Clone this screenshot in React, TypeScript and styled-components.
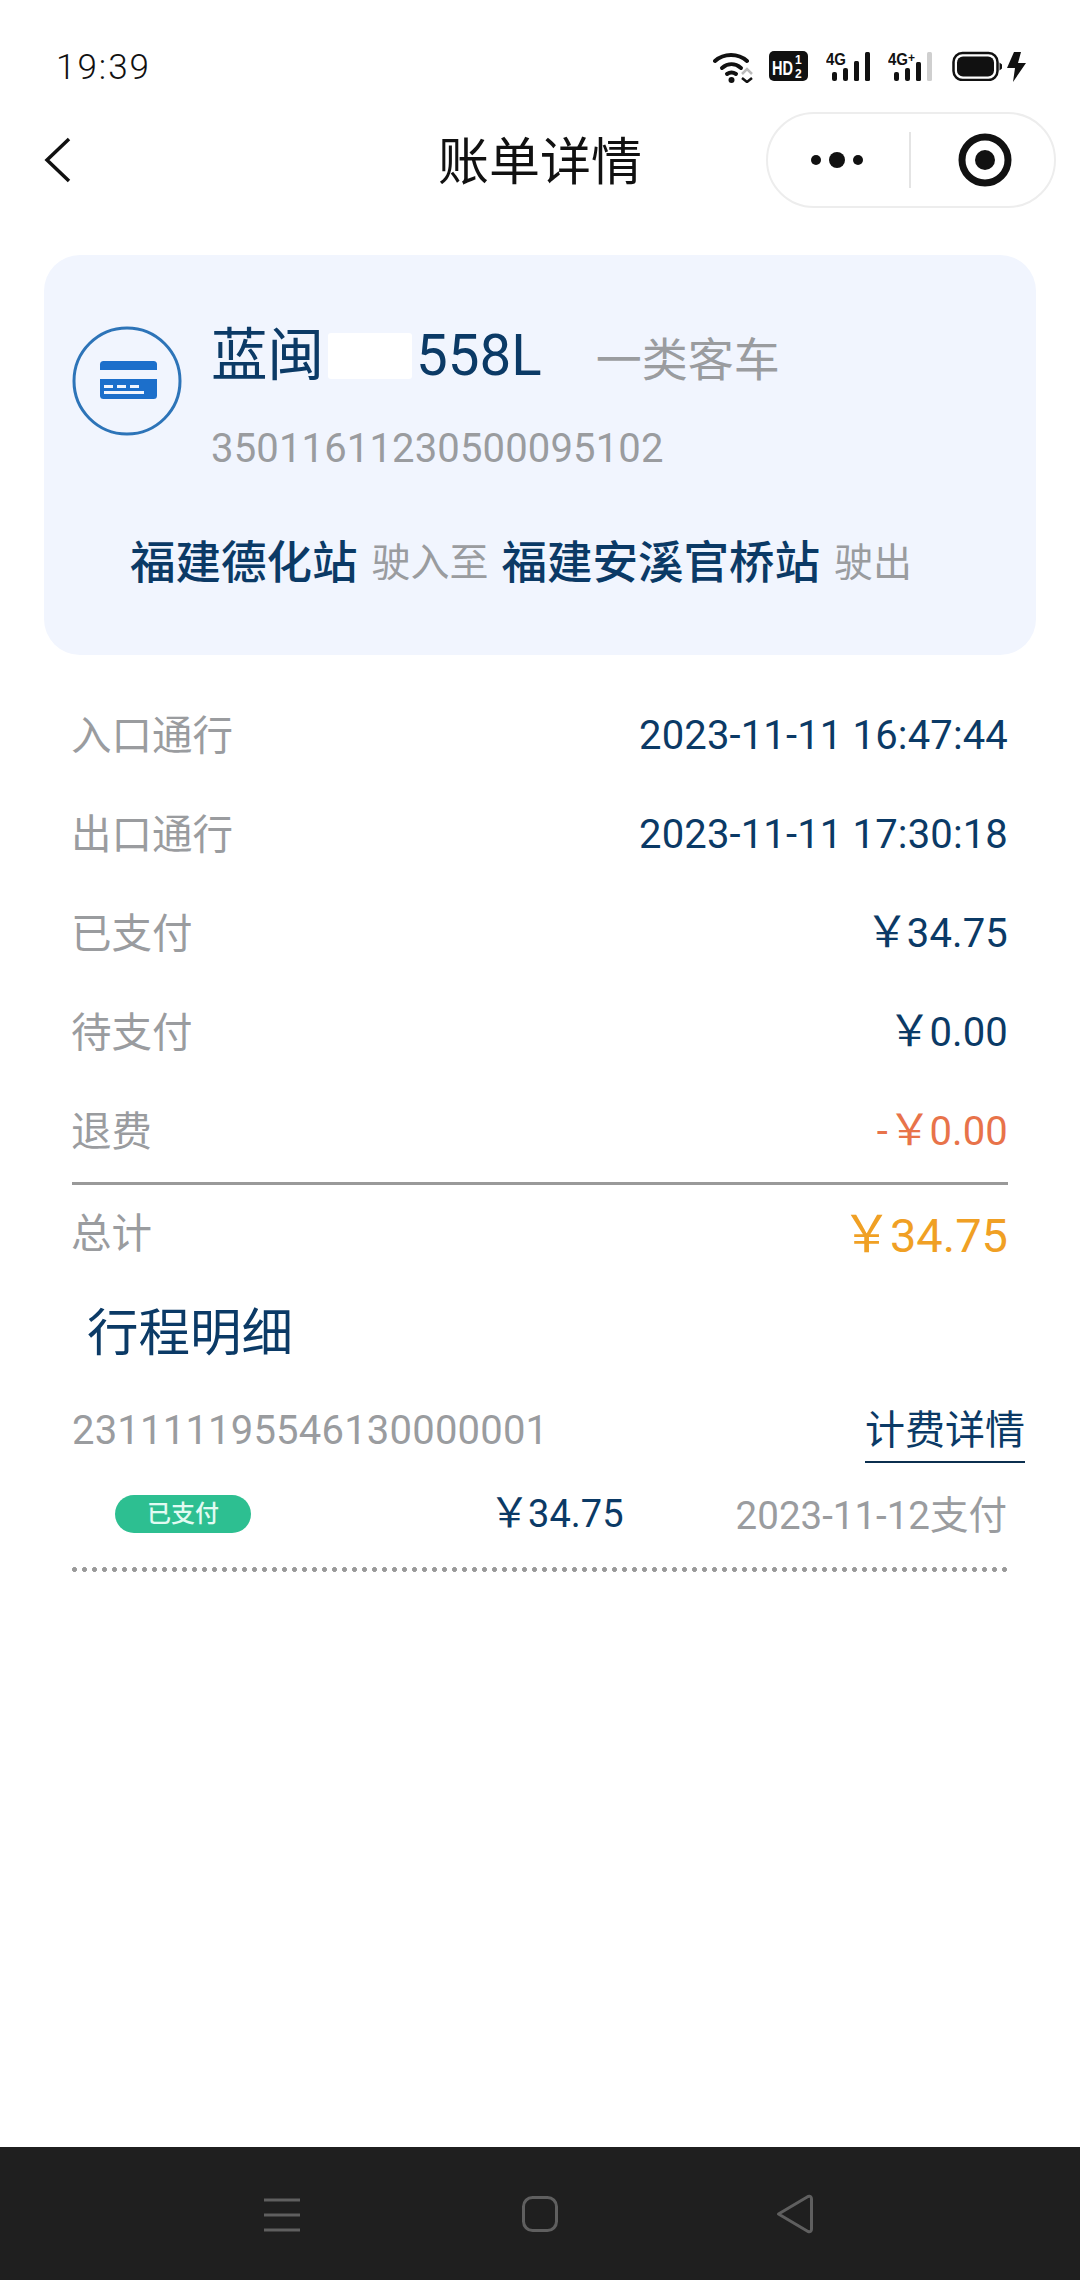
import React from "react";
import styled, { createGlobalStyle } from "styled-components";

const FONT = `Roboto, "Noto Sans CJK SC", sans-serif`;
const NAVY = "#0b3a66";
const GREY = "#9a9c9f";

const Global = createGlobalStyle`
  html, body { margin: 0; padding: 0; background: #fff; }
  * { box-sizing: border-box; }
`;

const Screen = styled.div`
  width: 1080px;
  height: 2280px;
  display: flex;
  flex-direction: column;
  background: #fff;
  font-family: ${FONT};
  overflow: hidden;
`;

const StatusBar = styled.div`
  height: 112px;
  padding: 0 54px 0 56px;
  display: flex;
  align-items: flex-start;
  justify-content: space-between;
  color: #111;
`;

const Clock = styled.div`
  margin-top: 48px;
  font-size: 35px;
  line-height: 40px;
  font-weight: 300;
  letter-spacing: 2px;
`;

const StatusIcons = styled.div`
  margin-top: 51px;
  display: flex;
  align-items: flex-start;
`;

const StatusIcon = styled.svg<{ $gap?: number }>`
  display: block;
  margin-left: ${(p) => p.$gap ?? 0}px;
`;

const NavBar = styled.div`
  height: 96px;
  padding: 0 24px;
  display: grid;
  grid-template-columns: minmax(0, 1fr) auto minmax(0, 1fr);
  align-items: center;
`;

const BackButton = styled.svg`
  display: block;
  margin-left: 20px;
`;

const Title = styled.div`
  margin-top: 5px;
  font-size: 51px;
  line-height: 60px;
  color: #111;
  font-weight: 400;
`;

const Capsule = styled.div`
  justify-self: end;
  width: 290px;
  height: 96px;
  border: 2px solid #ededed;
  border-radius: 48px;
  display: flex;
  align-items: center;
  background: #fff;
`;

const CapsuleCell = styled.div<{ $shift?: number }>`
  flex: 1;
  display: flex;
  align-items: center;
  justify-content: center;
  padding-left: ${(p) => p.$shift ?? 0}px;
`;

const CapsuleDivider = styled.div`
  width: 2px;
  height: 56px;
  margin-left: 2px;
  background: #e4e4e4;
`;

const SummaryCard = styled.section`
  margin: 47px 44px 0;
  height: 400px;
  background: #f1f5fe;
  border-radius: 36px;
  padding: 62px 0 0 28px;
`;

const CardHead = styled.div`
  display: flex;
  align-items: flex-start;
`;

const CardBadge = styled.svg`
  display: block;
  margin-top: 9px;
  flex: none;
`;

const CardInfo = styled.div`
  margin-left: 29px;
`;

const PlateLine = styled.div`
  display: flex;
  align-items: center;
  height: 86px;
  margin-top: -4px;
`;

const Plate = styled.span`
  font-size: 56.5px;
  line-height: 66px;
  color: ${NAVY};
`;

const PlateMask = styled.span`
  display: inline-block;
  width: 84px;
  height: 46px;
  margin: 0 4px 0 4px;
  background: #fff;
  border-radius: 3px;
`;

const VehicleClass = styled.span`
  margin-left: 54px;
  font-size: 46px;
  color: ${GREY};
`;

const CardNumber = styled.div`
  margin-top: 26px;
  font-size: 40px;
  line-height: 48px;
  letter-spacing: 0.15px;
  color: ${GREY};
`;

const Route = styled.div`
  margin-top: 56px;
  padding-left: 58px;
  display: flex;
  align-items: center;
  height: 60px;
`;

const Station = styled.span`
  font-size: 45.5px;
  font-weight: 500;
  color: ${NAVY};
`;

const RouteVerb = styled.span`
  margin: 0 13px 0 14px;
  font-size: 39px;
  color: ${GREY};
`;

const Details = styled.section`
  margin-top: 28px;
  padding: 0 72px;
`;

const Row = styled.div`
  height: 99px;
  display: flex;
  align-items: center;
  justify-content: space-between;
`;

const Label = styled.span`
  font-size: 40.5px;
  margin-left: -1px;
  color: ${GREY};
`;

const Value = styled.span<{ $color?: string }>`
  margin-top: 5px;
  font-size: 40px;
  letter-spacing: 0.15px;
  color: ${(p) => p.$color ?? NAVY};
`;

const Yuan = styled.span`
  font-size: 1.08em;
  line-height: 1;
  margin-right: -2px;
`;

const Rule = styled.div`
  margin-top: 4px;
  height: 3px;
  background: #999;
`;

const TotalRow = styled.div`
  height: 96px;
  display: flex;
  align-items: center;
  justify-content: space-between;
`;

const TotalLabel = styled(Label)`
  margin-top: -6px;
`;

const TotalValue = styled.span`
  margin-top: 4px;
  font-size: 47px;
  color: #f0a024;
`;

const SectionTitle = styled.h2`
  margin: 0;
  padding-left: 15px;
  height: 94px;
  display: flex;
  align-items: center;
  font-size: 51.5px;
  font-weight: 400;
  color: ${NAVY};
`;

const TripHead = styled.div`
  margin: 26px -17px 0 0;
  display: flex;
  justify-content: space-between;
  align-items: flex-start;
`;

const TripNumber = styled.span`
  font-size: 40px;
  line-height: 60px;
  letter-spacing: 0.2px;
  color: ${GREY};
`;

const FeeLink = styled.span`
  width: 160px;
  height: 60px;
  line-height: 60px;
  text-align: center;
  font-size: 40px;
  color: ${NAVY};
  border-bottom: 2px solid #0b2f4f;
  box-sizing: content-box;
`;

const TripRow = styled.div`
  height: 70px;
  margin-top: 16px;
  display: grid;
  grid-template-columns: 417px auto 1fr;
  align-items: center;
`;

const PaidTag = styled.span`
  margin-left: 43px;
  width: 136px;
  height: 38px;
  border-radius: 19px;
  background: #2dbf91;
  color: #e2fbf2;
  font-size: 24px;
  font-weight: 500;
  line-height: 38px;
  text-align: center;
`;

const TripAmount = styled.span`
  font-size: 38px;
  color: ${NAVY};
`;

const TripDate = styled.span`
  justify-self: end;
  margin: -5px 1px 0 0;
  font-size: 38.5px;
  color: ${GREY};
`;

const DottedRule = styled.div`
  margin-top: 18px;
  height: 5px;
  background-image: radial-gradient(circle at 2.5px 2.5px, #9a9a9a 2.2px, transparent 2.6px);
  background-size: 10px 5px;
  background-repeat: repeat-x;
`;

const Spacer = styled.div`
  flex: 1;
`;

const SystemNav = styled.div`
  height: 133px;
  flex: none;
  background: #1f1f1f;
  display: flex;
  align-items: flex-start;
  padding: 47px 0 0 264px;
`;

const MenuKey = styled.svg`
  display: block;
  margin-top: 4px;
`;

const HomeKey = styled.svg`
  display: block;
  margin: 2px 0 0 222px;
`;

const BackKey = styled.svg`
  display: block;
  margin-left: 218px;
`;

const condensed = `"Liberation Sans", Arial, sans-serif`;

function Signal({ plus, dim }: { plus?: boolean; dim?: boolean }) {
  return (
    <StatusIcon width="44" height="31" viewBox="0 0 44 31" $gap={18}>
      <text x="0" y="14" fontFamily={condensed} fontSize="17" fontWeight="700" fill="#111" textLength="20" lengthAdjust="spacingAndGlyphs">4G</text>
      {plus && <text x="20" y="11" fontFamily={condensed} fontSize="12" fontWeight="700" fill="#111">+</text>}
      <rect x="6" y="21" width="5" height="9" rx="2" fill="#111" />
      <rect x="17" y="17" width="5" height="13" rx="2" fill="#111" />
      <rect x="28" y={plus ? 11 : 10} width="5" height={plus ? 19 : 20} rx="1.5" fill="#111" />
      <rect x="39" y="1" width="5" height="29" rx="1.5" fill={dim ? "#cfcfcf" : "#111"} />
    </StatusIcon>
  );
}

export default function App() {
  return (
    <Screen>
      <Global />
      <StatusBar>
        <Clock>19:39</Clock>
        <StatusIcons>
          <StatusIcon width="40" height="32" viewBox="0 0 40 32">
            <g fill="none" stroke="#111" strokeLinecap="round" strokeWidth="4">
              <path d="M2 10 C11 2 25 2 34 10" />
              <path d="M9 17 C15 12 22 12 28 17" />
              <path d="M14 23 C17 21 20 21 23 23" />
            </g>
            <circle cx="18.5" cy="29" r="3" fill="#111" />
            <path d="M29 23 L34 18 L39 23" fill="none" stroke="#bbb" strokeWidth="2.5" />
            <path d="M29 27 L34 31 L39 27" fill="none" stroke="#111" strokeWidth="2.5" />
          </StatusIcon>
          <StatusIcon width="39" height="31" viewBox="0 0 39 31" $gap={16}>
            <rect width="39" height="30" rx="5" fill="#111" />
            <text x="3" y="24" fontFamily={condensed} fontSize="21" fontWeight="700" fill="#fff" textLength="21" lengthAdjust="spacingAndGlyphs">HD</text>
            <text x="26" y="13" fontFamily={condensed} fontSize="12" fontWeight="700" fill="#fff">1</text>
            <text x="26" y="27" fontFamily={condensed} fontSize="12" fontWeight="700" fill="#fff">2</text>
          </StatusIcon>
          <Signal />
          <Signal plus dim />
          <StatusIcon width="50" height="30" viewBox="0 0 50 30" $gap={20}>
            <rect x="1.5" y="2" width="44" height="27" rx="9" fill="none" stroke="#111" strokeWidth="2.5" />
            <rect x="5" y="5.5" width="37" height="20" rx="6" fill="#111" />
            <path d="M47.5 11.5 L50 13.5 V17.5 L47.5 19.5 Z" fill="#111" />
          </StatusIcon>
          <StatusIcon width="20" height="31" viewBox="0 0 20 31" $gap={4}>
            <path d="M8 1 H15 L12 12 H20 L7 31 L9 17 H1 Z" fill="#111" />
          </StatusIcon>
        </StatusIcons>
      </StatusBar>

      <NavBar>
        <BackButton width="28" height="48" viewBox="0 0 28 48">
          <path d="M25 3 L3 24 L25 45" fill="none" stroke="#111" strokeWidth="3.5" />
        </BackButton>
        <Title>账单详情</Title>
        <Capsule>
          <CapsuleCell>
            <svg width="60" height="20" viewBox="0 0 60 20">
              <circle cx="8" cy="10" r="5" fill="#111" />
              <circle cx="29" cy="10" r="8" fill="#111" />
              <circle cx="50" cy="10" r="5" fill="#111" />
            </svg>
          </CapsuleCell>
          <CapsuleDivider />
          <CapsuleCell $shift={4}>
            <svg width="54" height="54" viewBox="0 0 54 54">
              <circle cx="27" cy="27" r="23" fill="none" stroke="#111" strokeWidth="7" />
              <circle cx="27" cy="27" r="10" fill="#111" />
            </svg>
          </CapsuleCell>
        </Capsule>
      </NavBar>

      <SummaryCard>
        <CardHead>
          <CardBadge width="110" height="110" viewBox="0 0 110 110">
            <circle cx="55" cy="55" r="53" fill="none" stroke="#2d74b8" strokeWidth="3" />
            <rect x="28" y="35" width="57" height="38" rx="3.5" fill="#1c6fcb" />
            <rect x="28" y="44" width="57" height="9" fill="#f1f5fe" />
            <rect x="32" y="59" width="9" height="3" fill="#f1f5fe" />
            <rect x="45" y="59" width="9" height="3" fill="#f1f5fe" />
            <rect x="58" y="59" width="9" height="3" fill="#f1f5fe" />
            <rect x="32" y="65" width="40" height="3" fill="#f1f5fe" />
          </CardBadge>
          <CardInfo>
            <PlateLine>
              <Plate>蓝闽</Plate>
              <PlateMask />
              <Plate>558L</Plate>
              <VehicleClass>一类客车</VehicleClass>
            </PlateLine>
            <CardNumber>35011611230500095102</CardNumber>
          </CardInfo>
        </CardHead>
        <Route>
          <Station>福建德化站</Station>
          <RouteVerb>驶入至</RouteVerb>
          <Station>福建安溪官桥站</Station>
          <RouteVerb>驶出</RouteVerb>
        </Route>
      </SummaryCard>

      <Details>
        <Row>
          <Label>入口通行</Label>
          <Value>2023-11-11 16:47:44</Value>
        </Row>
        <Row>
          <Label>出口通行</Label>
          <Value>2023-11-11 17:30:18</Value>
        </Row>
        <Row>
          <Label>已支付</Label>
          <Value><Yuan>￥</Yuan>34.75</Value>
        </Row>
        <Row>
          <Label>待支付</Label>
          <Value><Yuan>￥</Yuan>0.00</Value>
        </Row>
        <Row>
          <Label>退费</Label>
          <Value $color="#e8734a">-<Yuan>￥</Yuan>0.00</Value>
        </Row>
        <Rule />
        <TotalRow>
          <TotalLabel>总计</TotalLabel>
          <TotalValue><Yuan>￥</Yuan>34.75</TotalValue>
        </TotalRow>
        <SectionTitle>行程明细</SectionTitle>
        <TripHead>
          <TripNumber>231111195546130000001</TripNumber>
          <FeeLink>计费详情</FeeLink>
        </TripHead>
        <TripRow>
          <PaidTag>已支付</PaidTag>
          <TripAmount><Yuan>￥</Yuan>34.75</TripAmount>
          <TripDate>2023-11-12支付</TripDate>
        </TripRow>
        <DottedRule />
      </Details>

      <Spacer />

      <SystemNav>
        <MenuKey width="36" height="36" viewBox="0 0 36 36">
          <path d="M0 2 H36 M0 17 H36 M0 32 H36" stroke="#5f5f5f" strokeWidth="3" />
        </MenuKey>
        <HomeKey width="36" height="36" viewBox="0 0 36 36">
          <rect x="1.5" y="1.5" width="33" height="33" rx="9" fill="none" stroke="#5f5f5f" strokeWidth="3" />
        </HomeKey>
        <BackKey width="38" height="40" viewBox="0 0 38 40">
          <path d="M2.5 20 L32 2.5 Q35.5 1.5 35.5 5 V35 Q35.5 38.5 32 37.5 L2.5 20 Z" fill="none" stroke="#5f5f5f" strokeWidth="3" strokeLinejoin="round" />
        </BackKey>
      </SystemNav>
    </Screen>
  );
}
